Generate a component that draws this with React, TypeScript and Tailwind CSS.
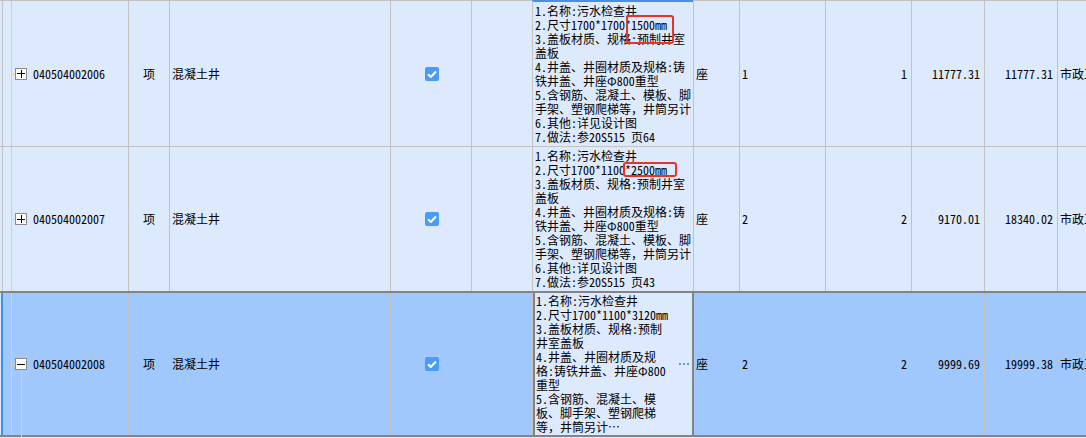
import React from "react";

const FONT = '"Noto Sans Mono CJK SC", "Noto Sans CJK SC", "Liberation Mono", monospace';

type Row = {
  code: string;
  desc: string[];
  qtyExpr: string;
  qty: string;
  price: string;
  total: string;
  selected?: boolean;
  expanded?: boolean;
  red?: { left: number; top: number; width: number; height: number };
};

const rows: Row[] = [
  {
    code: "040504002006",
    desc: [
      "1.名称:污水检查井",
      "2.尺寸1700*1700*1500mm",
      "3.盖板材质、规格:预制井室",
      "盖板",
      "4.井盖、井圈材质及规格:铸",
      "铁井盖、井座Φ800重型",
      "5.含钢筋、混凝土、模板、脚",
      "手架、塑钢爬梯等，井筒另计",
      "6.其他:详见设计图",
      "7.做法:参20S515 页64",
    ],
    qtyExpr: "1",
    qty: "1",
    price: "11777.31",
    total: "11777.31",
    red: { left: 93, top: 14, width: 48, height: 29 },
  },
  {
    code: "040504002007",
    desc: [
      "1.名称:污水检查井",
      "2.尺寸1700*1100*2500mm",
      "3.盖板材质、规格:预制井室",
      "盖板",
      "4.井盖、井圈材质及规格:铸",
      "铁井盖、井座Φ800重型",
      "5.含钢筋、混凝土、模板、脚",
      "手架、塑钢爬梯等，井筒另计",
      "6.其他:详见设计图",
      "7.做法:参20S515 页43",
    ],
    qtyExpr: "2",
    qty: "2",
    price: "9170.01",
    total: "18340.02",
    red: { left: 90, top: 15, width: 54, height: 15 },
  },
  {
    code: "040504002008",
    desc: [
      "1.名称:污水检查井",
      "2.尺寸1700*1100*3120mm",
      "3.盖板材质、规格:预制",
      "井室盖板",
      "4.井盖、井圈材质及规",
      "格:铸铁井盖、井座Φ800",
      "重型",
      "5.含钢筋、混凝土、模",
      "板、脚手架、塑钢爬梯",
      "等，井筒另计…",
    ],
    qtyExpr: "2",
    qty: "2",
    price: "9999.69",
    total: "19999.38",
    selected: true,
    expanded: true,
  },
];

function TreeBox({ expanded }: { expanded?: boolean }) {
  return (
    <div className="relative flex h-[12px] w-[12px] items-center justify-center border border-[#8a8a8a] bg-white">
      <div className="absolute h-[1px] w-[8px] bg-black" />
      {!expanded && <div className="absolute h-[8px] w-[1px] bg-black" />}
    </div>
  );
}

function Check() {
  return (
    <div className="flex h-[14px] w-[14px] items-center justify-center rounded-[2px] bg-[#4a9bf5]">
      <svg width="10" height="8" viewBox="0 0 10 8">
        <path d="M1 4.2 L3.8 7 L9 1.5" stroke="white" strokeWidth="2" fill="none" />
      </svg>
    </div>
  );
}

function DataRow({ r, index }: { r: Row; index: number }) {
  const bg = r.selected ? "bg-[#a0c8fc]" : "bg-[#dde9fd]";
  const rowBorder = r.selected
    ? "h-[146px] border-t-2 border-b-2 border-[#848484]"
    : index === 0
    ? "h-[146px] border-b border-[#c2c2c2]"
    : "h-[144px]";
  const cell = "h-full shrink-0 border-r border-[#c2c2c2]";
  return (
    <div className={`flex ${rowBorder} ${bg}`}>
      {/* left gutter */}
      {r.selected ? (
        <div className="flex h-full w-[3px] shrink-0">
          <div className="h-full w-[1px] bg-[#dde9fd]" />
          <div className="h-full w-[3px] bg-[#3f8ff0]" />
        </div>
      ) : (
        <div className="h-full w-[3px] shrink-0 border-r border-[#c2c2c2]" />
      )}
      {/* code */}
      <div className={`${cell} relative flex w-[126px] items-center pl-[12px]`}>
        <div className="absolute left-[8px] top-0 h-full w-[1px] bg-[#f8c98e]" />
        {r.expanded && (
          <div className="absolute left-[18px] top-1/2 mt-[6px] h-[72px] w-[1px] bg-[#f8c98e]" />
        )}
        <div className="absolute left-[8px] top-1/2 h-[1px] w-[5px] bg-[#f8c98e]" />
        <div className="relative">
          <TreeBox expanded={r.expanded} />
        </div>
        <span className="ml-[6px] text-[12px] leading-[14px] text-black">{r.code}</span>
      </div>
      {/* type */}
      <div className={`${cell} flex w-[41px] items-center justify-center`}>
        <span className="text-[12px] leading-[14px] text-black">项</span>
      </div>
      {/* name */}
      <div className={`${cell} flex w-[221px] items-center pl-[2px]`}>
        <span className="text-[12px] leading-[14px] text-black">混凝土井</span>
      </div>
      {/* check */}
      <div className={`${cell} flex w-[81px] items-center justify-center pl-[1px]`}>
        <Check />
      </div>
      {/* empty */}
      <div className={`${cell} w-[61px]`} />
      {/* description */}
      {r.selected ? (
        <div className="relative -mt-[0px] flex h-full w-[161px] shrink-0 items-center border-x-2 border-[#848484] bg-[#dde9fd] pl-[1px]">
          <div className="flex flex-col text-[12px] leading-[14px] text-black whitespace-pre">
            {r.desc.map((l, i) => (
              <div key={i}>{l}</div>
            ))}
          </div>
          <div className="absolute right-[3px] top-1/2 flex -translate-y-1/2 gap-[2px]">
            <div className="h-[2px] w-[2px] bg-[#5a9ee8]" />
            <div className="h-[2px] w-[2px] bg-[#5a9ee8]" />
            <div className="h-[2px] w-[2px] bg-[#5a9ee8]" />
          </div>
        </div>
      ) : (
        <div className={`${cell} relative flex w-[161px] items-center pl-[2px]`}>
          <div className="flex flex-col text-[12px] leading-[14px] text-black whitespace-pre">
            {r.desc.map((l, i) => (
              <div key={i}>{l}</div>
            ))}
          </div>
          {r.red && (
            <div
              className="absolute rounded-[3px] border-2 border-[#e8332a]"
              style={{ left: r.red.left, top: r.red.top, width: r.red.width, height: r.red.height }}
            />
          )}
        </div>
      )}
      {/* unit */}
      <div className={`${cell} flex w-[46px] items-center pl-[2px]`}>
        <span className="text-[12px] leading-[14px] text-black">座</span>
      </div>
      {/* qty expr */}
      <div className={`${cell} flex w-[86px] items-center pl-[2px]`}>
        <span className="text-[12px] leading-[14px] text-black">{r.qtyExpr}</span>
      </div>
      {/* qty */}
      <div className={`${cell} flex w-[86px] items-center justify-end pr-[4px]`}>
        <span className="text-[12px] leading-[14px] text-black">{r.qty}</span>
      </div>
      {/* price */}
      <div className={`${cell} flex w-[73px] items-center justify-end pr-[4px]`}>
        <span className="text-[12px] leading-[14px] text-black">{r.price}</span>
      </div>
      {/* total */}
      <div className={`${cell} flex w-[73px] items-center justify-end pr-[4px]`}>
        <span className="text-[12px] leading-[14px] text-black">{r.total}</span>
      </div>
      {/* category */}
      <div className="flex h-full w-[120px] shrink-0 items-center pl-[2px]">
        <span className="whitespace-nowrap text-[12px] leading-[14px] text-black">市政工程</span>
      </div>
    </div>
  );
}

export default function App() {
  return (
    <div className="h-[438px] w-[1086px] overflow-hidden bg-[#dde9fd]" style={{ fontFamily: FONT }}>
      <div className="flex h-[1px]">
        <div className="h-full w-[532px] shrink-0 bg-[#c2c2c2]" />
        <div className="h-[2px] w-[161px] shrink-0 bg-[#4a90e2]" />
        <div className="h-full flex-1 bg-[#c2c2c2]" />
      </div>
      {rows.map((r, i) => (
        <DataRow key={r.code} r={r} index={i} />
      ))}
    </div>
  );
}
